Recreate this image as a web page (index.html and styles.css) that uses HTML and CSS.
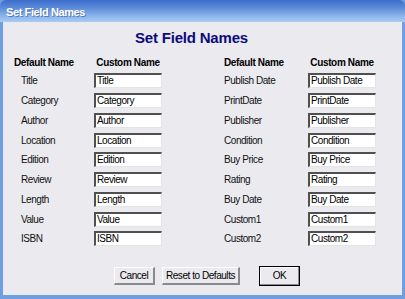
FILE: index.html
```html
<!DOCTYPE html>
<html>
<head>
<meta charset="utf-8">
<link rel="stylesheet" href="styles.css">
</head>
<body>
<div class="window">
  <div class="titlebar">Set Field Names</div>
  <div class="content">
    <h1 class="heading">Set Field Names</h1>
    <div class="columns">
      <div class="half left">
        <div class="head">Default Name</div><div class="head center">Custom Name</div>
        <div class="label">Title</div><div class="field">Title</div>
        <div class="label">Category</div><div class="field">Category</div>
        <div class="label">Author</div><div class="field">Author</div>
        <div class="label">Location</div><div class="field">Location</div>
        <div class="label">Edition</div><div class="field">Edition</div>
        <div class="label">Review</div><div class="field">Review</div>
        <div class="label">Length</div><div class="field">Length</div>
        <div class="label">Value</div><div class="field">Value</div>
        <div class="label">ISBN</div><div class="field">ISBN</div>
      </div>
      <div class="half right">
        <div class="head">Default Name</div><div class="head center">Custom Name</div>
        <div class="label">Publish Date</div><div class="field">Publish Date</div>
        <div class="label">PrintDate</div><div class="field">PrintDate</div>
        <div class="label">Publisher</div><div class="field">Publisher</div>
        <div class="label">Condition</div><div class="field">Condition</div>
        <div class="label">Buy Price</div><div class="field">Buy Price</div>
        <div class="label">Rating</div><div class="field">Rating</div>
        <div class="label">Buy Date</div><div class="field">Buy Date</div>
        <div class="label">Custom1</div><div class="field">Custom1</div>
        <div class="label">Custom2</div><div class="field">Custom2</div>
      </div>
    </div>
    <div class="buttons">
      <div class="btn cancel">Cancel</div>
      <div class="btn reset">Reset to Defaults</div>
      <div class="btn ok">OK</div>
    </div>
  </div>
</div>
</body>
</html>
```
FILE: styles.css
```css
* { box-sizing: border-box; }
html, body { margin: 0; padding: 0; }
body {
  width: 405px;
  height: 299px;
  overflow: hidden;
  font-family: "Liberation Sans", Arial, sans-serif;
  font-size: 10px;
  letter-spacing: -0.45px;
  color: #000;
  background: #7aaee8;
}
.window {
  width: 405px;
  height: 299px;
  display: flex;
  flex-direction: column;
  background: #6f9fe3;
}
.titlebar {
  height: 22px;
  flex: none;
  padding: 5px 0 0 6px;
  color: #fff;
  font-weight: bold;
  font-size: 11px;
  letter-spacing: -0.4px;
  line-height: 14px;
  text-shadow: 1px 1px 0 rgba(40, 60, 120, 0.5);
  background: linear-gradient(#3b6ccb 0%, #5b8ad8 35%, #8eb6ec 75%, #a9cbf3 100%);
  border-radius: 6px 6px 0 0;
}
.content {
  flex: 1;
  margin: 0 3px 4px 3px;
  background: #ebeaef;
  display: flex;
  flex-direction: column;
}
.heading {
  margin: 6px 0 0 0;
  padding-right: 22px;
  height: 20px;
  line-height: 20px;
  text-align: center;
  font-size: 15px;
  letter-spacing: -0.2px;
  font-weight: bold;
  color: #0b0b80;
}
.columns {
  display: flex;
  margin-top: 6px;
}
.half {
  display: grid;
  grid-template-columns: 80px 68px;
  grid-template-rows: 17px;
  grid-auto-rows: 19.75px;
  align-items: center;
}
.half.left { margin-left: 11px; }
.half.right { margin-left: 62px; grid-template-columns: 84px 68px; }
.head {
  font-weight: bold;
  font-size: 10px;
  letter-spacing: -0.35px;
  height: 14px;
  line-height: 14px;
  white-space: nowrap;
}
.head.center { text-align: center; }
.left .label { padding-left: 7px; }
.label {
  color: #111;
  white-space: nowrap;
}
.field {
  height: 15px;
  line-height: 12px;
  background: #fff;
  border-top: 2px solid #505050;
  border-left: 2px solid #505050;
  border-right: 1px solid #e4e4e4;
  border-bottom: 1px solid #e4e4e4;
  padding-left: 1px;
  white-space: nowrap;
  overflow: hidden;
}
.buttons {
  display: flex;
  margin-top: 18px;
  margin-left: 111px;
}
.btn {
  height: 18px;
  line-height: 15px;
  text-align: center;
  white-space: nowrap;
  background: #ebeaef;
  border-top: 1px solid #fff;
  border-left: 1px solid #fff;
  border-right: 2px solid #8a8a8a;
  border-bottom: 2px solid #8a8a8a;
}
.cancel { width: 41px; }
.reset { width: 78px; margin-left: 7px; }
.ok {
  width: 41px;
  margin-left: 19px;
  height: 20px;
  margin-top: -1px;
  border: 1px solid #000;
  box-shadow: inset -1px -1px 0 #8a8a8a, inset 1px 1px 0 #fff;
  line-height: 18px;
}
```
